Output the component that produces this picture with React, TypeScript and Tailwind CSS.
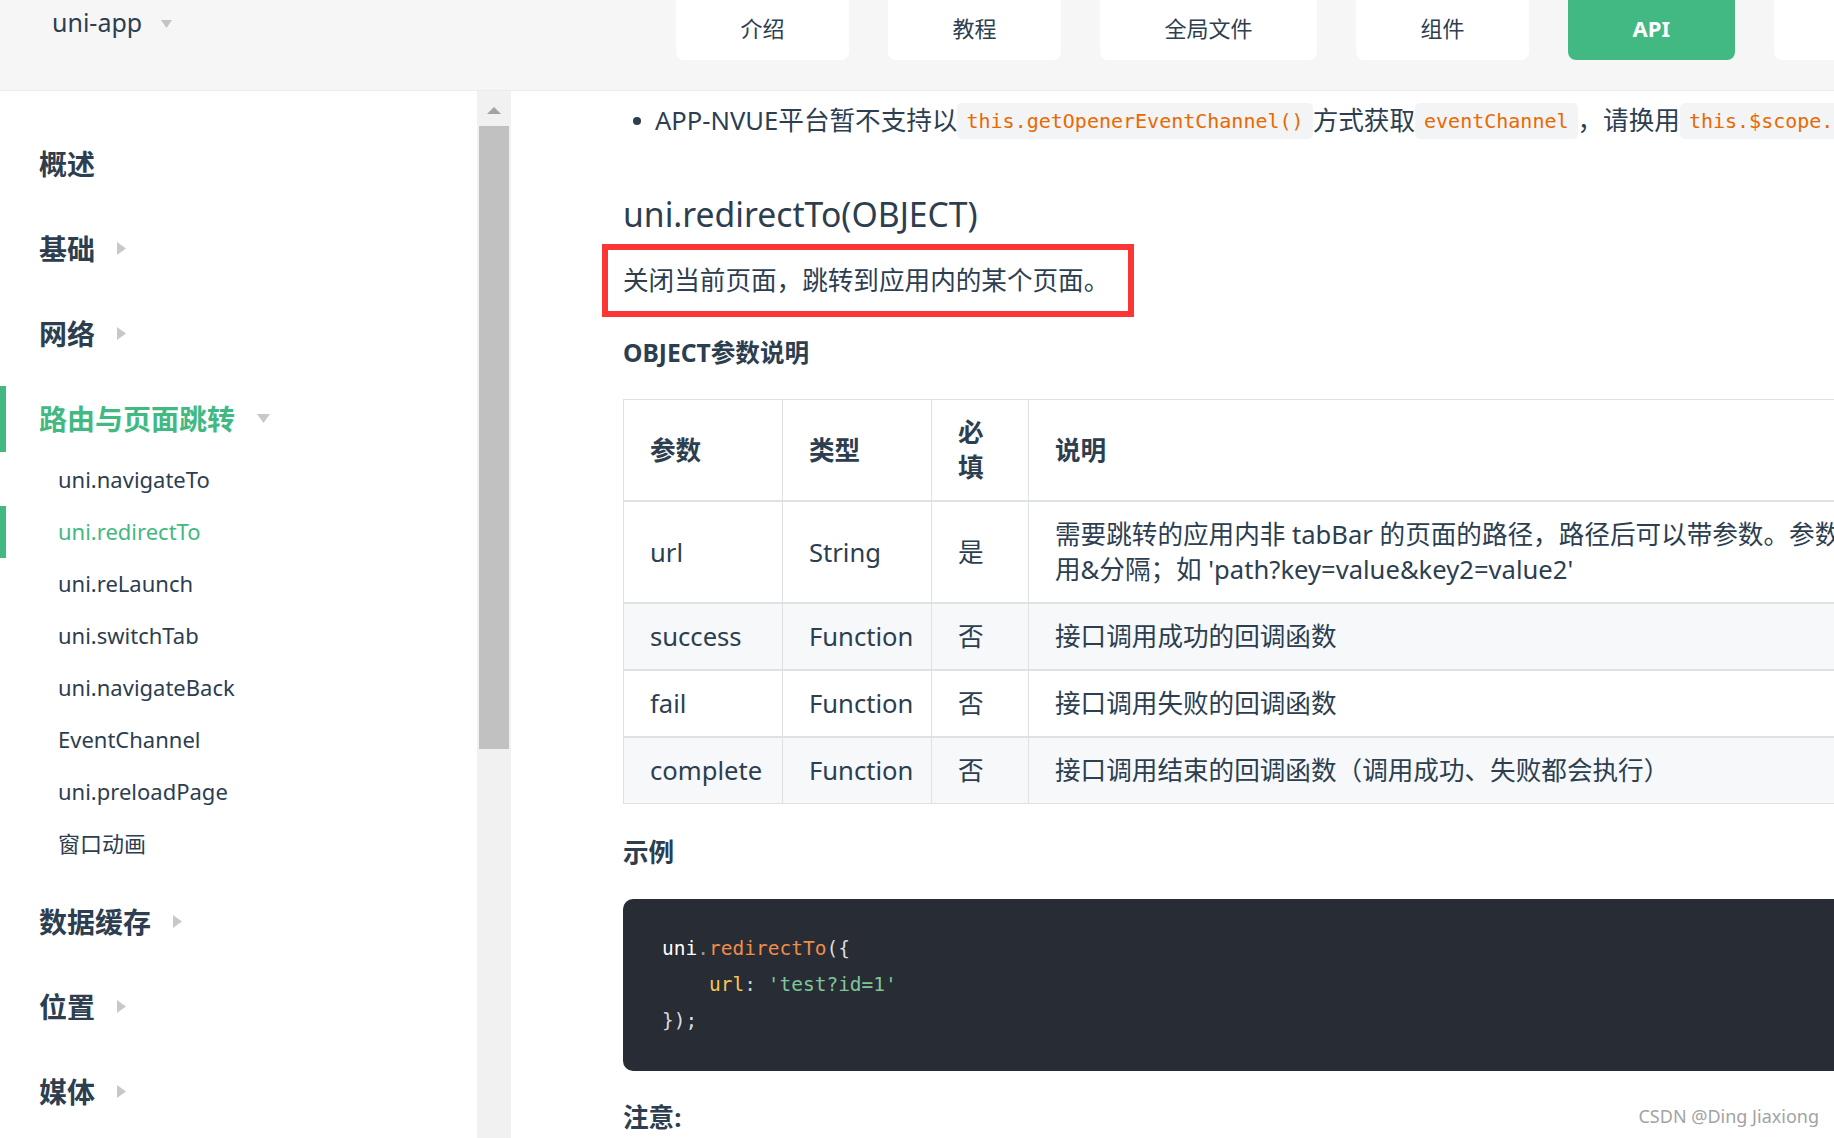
import React from 'react';

const TEXT = '#2c3e50';

type Group = {
  name: string;
  arrow?: 'right' | 'down';
  active?: boolean;
  children?: { name: string; active?: boolean }[];
};

const groups: Group[] = [
  { name: '概述' },
  { name: '基础', arrow: 'right' },
  { name: '网络', arrow: 'right' },
  {
    name: '路由与页面跳转',
    arrow: 'down',
    active: true,
    children: [
      { name: 'uni.navigateTo' },
      { name: 'uni.redirectTo', active: true },
      { name: 'uni.reLaunch' },
      { name: 'uni.switchTab' },
      { name: 'uni.navigateBack' },
      { name: 'EventChannel' },
      { name: 'uni.preloadPage' },
      { name: '窗口动画' },
    ],
  },
  { name: '数据缓存', arrow: 'right' },
  { name: '位置', arrow: 'right' },
  { name: '媒体', arrow: 'right' },
];

const tabs = ['介绍', '教程', '全局文件', '组件', 'API', '其他'];

const rows = [
  {
    name: 'url',
    type: 'String',
    req: '是',
    desc: (
      <>
        <span className="whitespace-nowrap">
          需要跳转的应用内非 tabBar 的页面的路径，路径后可以带参数。参数与路径之间使用?分隔，参数键与参数值用=相连，不同参数
        </span>
        <br />
        用&amp;分隔；如 'path?key=value&amp;key2=value2'
      </>
    ),
  },
  { name: 'success', type: 'Function', req: '否', desc: '接口调用成功的回调函数' },
  { name: 'fail', type: 'Function', req: '否', desc: '接口调用失败的回调函数' },
  { name: 'complete', type: 'Function', req: '否', desc: '接口调用结束的回调函数（调用成功、失败都会执行）' },
];

function Arrow({ dir }: { dir: 'right' | 'down' }) {
  if (dir === 'down') {
    return (
      <svg width="13" height="9" viewBox="0 0 13 9" className="ml-[22px]">
        <polygon points="0,0 13,0 6.5,9" fill="#c8c8c8" />
      </svg>
    );
  }
  return (
    <svg width="9" height="13" viewBox="0 0 9 13" className="ml-[22px]">
      <polygon points="0,0 9,6.5 0,13" fill="#c8c8c8" />
    </svg>
  );
}

function Code({ children }: { children: React.ReactNode }) {
  return (
    <span
      className="inline-block leading-[36px] px-[9px] rounded-[5px] bg-[#f3f4f5] text-[#e96900] text-[20px]"
      style={{ fontFamily: '"DejaVu Sans Mono", "Liberation Mono", monospace' }}
    >
      {children}
    </span>
  );
}

export default function App() {
  return (
    <div
      className="w-[1834px] h-[1138px] overflow-hidden bg-white flex flex-col relative"
      style={{ fontFamily: '"Noto Sans", "Noto Sans CJK SC", sans-serif', color: TEXT }}
    >
      {/* top bar */}
      <header className="h-[91px] shrink-0 bg-[#f6f6f6] border-b border-[#eaecef] flex">
        <div className="w-[676px] shrink-0 flex items-start pl-[52px] pt-[6px]">
          <span className="text-[25px] leading-[32px]">uni-app</span>
          <svg width="11" height="8" viewBox="0 0 11 8" className="ml-[19px] mt-[14px]">
            <polygon points="0,0 11,0 5.5,8" fill="#c4c4c4" />
          </svg>
        </div>
        <nav className="flex gap-[39px]">
          {tabs.map((t) => (
            <div
              key={t}
              className={`h-[60px] px-[64.5px] pb-[3px] rounded-b-[8px] flex items-center text-[22px] whitespace-nowrap ${
                t === 'API' ? 'bg-[#42b983] text-white font-bold' : 'bg-white'
              }`}
            >
              {t}
            </div>
          ))}
        </nav>
      </header>

      <div className="flex flex-1 min-h-0">
        {/* sidebar */}
        <aside className="w-[477px] shrink-0 pt-[30px] overflow-hidden">
          {groups.map((g) => (
            <div key={g.name} className="py-[9.5px]">
              <div
                className={`h-[66px] flex items-center pl-[33px] border-l-[6px] text-[28px] font-bold ${
                  g.active ? 'border-[#42b983] text-[#42b983]' : 'border-transparent'
                }`}
              >
                {g.name}
                {g.arrow && <Arrow dir={g.arrow} />}
              </div>
              {g.children && (
                <div className="mt-[2px]">
                  {g.children.map((c) => (
                    <div
                      key={c.name}
                      className={`h-[52px] flex items-center pl-[52px] border-l-[6px] text-[22px] ${
                        c.active ? 'border-[#42b983] text-[#42b983]' : 'border-transparent'
                      }`}
                    >
                      {c.name}
                    </div>
                  ))}
                </div>
              )}
            </div>
          ))}
        </aside>

        {/* scrollbar */}
        <div className="w-[34px] shrink-0 bg-[#f1f1f1] flex flex-col items-center">
          <svg width="14" height="7" viewBox="0 0 14 7" className="mt-[16px]">
            <polygon points="0,7 14,7 7,0" fill="#a3a3a3" />
          </svg>
          <div className="mt-[12px] w-[30px] h-[623px] bg-[#c1c1c1]" />
        </div>

        {/* content */}
        <main className="flex-1 min-w-0 overflow-hidden pl-[112px] pt-[12px] text-[25.6px]">
          <div className="flex items-center h-[36px] whitespace-nowrap">
            <span className="ml-[10px] mr-[14px] w-[8px] h-[8px] rounded-full bg-[#2c3e50] shrink-0" />
            <span>APP-NVUE平台暂不支持以</span>
            <Code>this.getOpenerEventChannel()</Code>
            <span>方式获取</span>
            <Code>eventChannel</Code>
            <span>，请换用</span>
            <Code>this.$scope.eventChannel</Code>
            <span>来获取</span>
          </div>

          <h2 className="mt-[55px] text-[33.7px] leading-[40px] font-normal">uni.redirectTo(OBJECT)</h2>

          <div className="mt-[10px] -ml-[21px] w-[532px] h-[73px] border-[6px] border-[#fc3535] flex items-center pl-[15px]">
            <p className="leading-[36px] whitespace-nowrap">关闭当前页面，跳转到应用内的某个页面。</p>
          </div>

          <h4 className="mt-[19px] text-[24.6px] leading-[34px] font-bold">OBJECT参数说明</h4>

          <table className="mt-[29px] table-fixed border-collapse w-[1805px] leading-[35px]">
            <colgroup>
              <col className="w-[159px]" />
              <col className="w-[149px]" />
              <col className="w-[97px]" />
              <col className="w-[1400px]" />
            </colgroup>
            <thead>
              <tr>
                {['参数', '类型', '必填', '说明'].map((h) => (
                  <th key={h} className="border border-[#dfe2e5] px-[26px] py-[15px] text-left font-bold">
                    {h}
                  </th>
                ))}
              </tr>
            </thead>
            <tbody>
              {rows.map((r, i) => (
                <tr key={r.name} className={`border-t-2 border-[#dfe2e5] ${i % 2 === 1 ? 'bg-[#f6f8fa]' : 'bg-white'}`}>
                  <td className="border border-[#dfe2e5] px-[26px] py-[15px]">{r.name}</td>
                  <td className="border border-[#dfe2e5] px-[26px] py-[15px]">{r.type}</td>
                  <td className="border border-[#dfe2e5] px-[26px] py-[15px]">{r.req}</td>
                  <td className="border border-[#dfe2e5] px-[26px] py-[15px] overflow-hidden">{r.desc}</td>
                </tr>
              ))}
            </tbody>
          </table>

          <h3 className="mt-[32px] text-[25.6px] leading-[34px] font-bold">示例</h3>

          <pre
            className="mt-[29px] w-[1300px] bg-[#282c34] rounded-[10px] py-[32px] pl-[39px] text-[19.5px] leading-[36px] text-[#cccccc]"
            style={{ fontFamily: '"DejaVu Sans Mono", "Liberation Mono", monospace' }}
          >
            <div>
              <span className="text-white">uni</span>
              <span className="text-[#999999]">.</span>
              <span className="text-[#f08d49]">redirectTo</span>
              <span className="text-[#dddddd]">({'{'}</span>
            </div>
            <div>
              {'    '}
              <span className="text-[#f8c555]">url</span>
              <span className="text-[#cccccc]">: </span>
              <span className="text-[#7ec699]">'test?id=1'</span>
            </div>
            <div className="text-[#dddddd]">{'});'}</div>
          </pre>

          <h3 className="mt-[30px] text-[25.6px] leading-[34px] font-bold">注意:</h3>
        </main>
      </div>

      <div className="absolute right-[15px] bottom-[8px] text-[18px] text-[#a3a3a3]">CSDN @Ding Jiaxiong</div>
    </div>
  );
}
